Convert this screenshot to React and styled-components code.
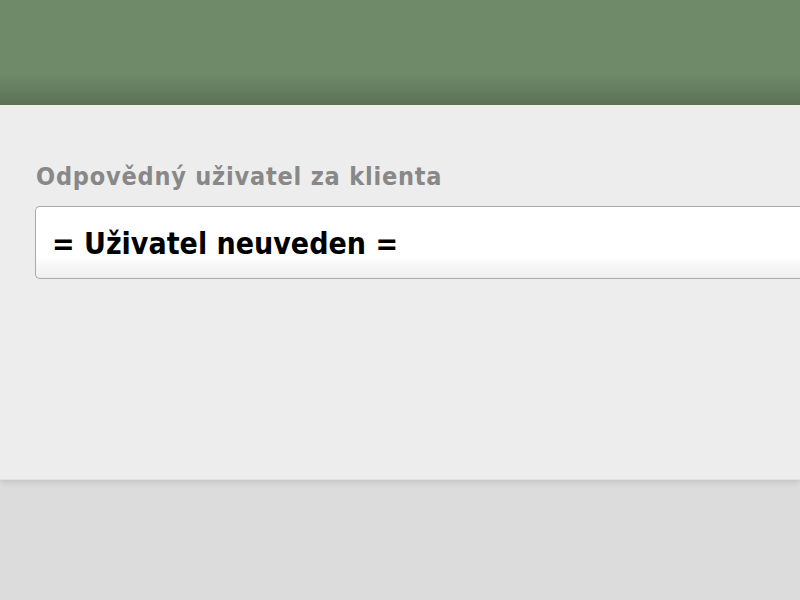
import styled, { createGlobalStyle } from "styled-components";

const Global = createGlobalStyle`
    html, body {
        margin: 0;
        padding: 0;
        background: #dcdcdc;
        overflow: hidden;
    }
    body {
        width: 800px;
        height: 600px;
        font-family: "DejaVu Sans Condensed", "DejaVu Sans", sans-serif;
    }
`

const Header = styled.div`
    height: 105px;
    background: linear-gradient(to bottom, #6e8a69 0%, #6e8a69 70%, #5c7157 100%);
`

const Panel = styled.div`
    height: 374px;
    background: #ededed;
    padding: 58px 0 0 35px;
    box-sizing: border-box;
    box-shadow: 0 1px 0 #e2e2e2, 0 3px 6px rgba(0,0,0,0.12);
    position: relative;
`

const Label = styled.div`
    font-size: 25px;
    font-weight: bold;
    letter-spacing: 0.8px;
    color: #888888;
    line-height: 28px;
    margin-left: 1px;
`

const Select = styled.div`
    margin-top: 15px;
    width: 800px;
    height: 73px;
    box-sizing: border-box;
    border: 1px solid #aaaaaa;
    border-right: none;
    border-radius: 5px 0 0 5px;
    background: linear-gradient(to bottom, #ffffff 0%, #ffffff 70%, #eeeeee 100%);
    display: flex;
    align-items: center;
    padding: 2px 0 0 16px;
    font-size: 30px;
    font-weight: bold;
    color: #000;
`

export default function App(){
    return <>
        <Global/>
        <Header/>
        <Panel>
            <Label>Odpovědný uživatel za klienta</Label>
            <Select>= Uživatel neuveden =</Select>
        </Panel>
    </>
}
